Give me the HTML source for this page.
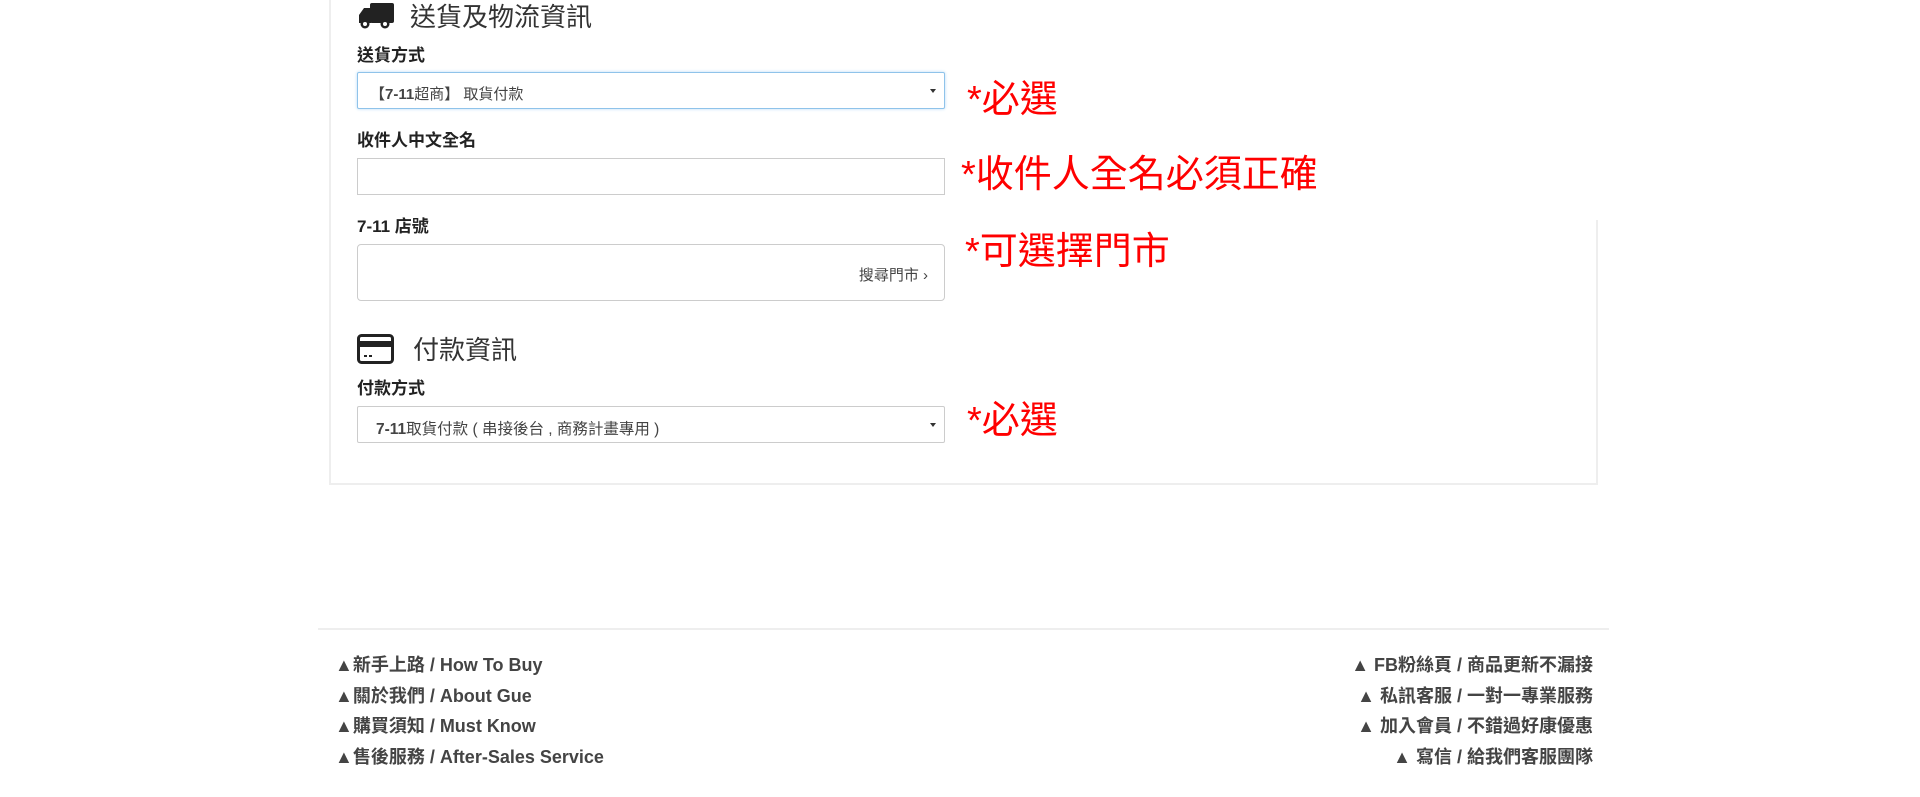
<!DOCTYPE html>
<html><head><meta charset="utf-8">
<style>
*{margin:0;padding:0;box-sizing:border-box}
body{width:1920px;height:797px;background:#fff;position:relative;overflow:hidden;font-family:"Liberation Sans","Noto Sans CJK TC",sans-serif;color:#333}
.a{position:absolute;white-space:nowrap}
.lbl{font-size:17px;font-weight:bold;color:#222;line-height:1}
.box{position:absolute;left:357px;width:588px;border:1px solid #ccc;background:#fff}
.red{color:#f00;font-size:38px;line-height:1}
.h{font-size:26px;color:#333;line-height:1}
.f{font-size:18px;font-weight:bold;color:#444;line-height:1}
.arr{position:absolute;right:8px;top:50%;margin-top:-2px;border-left:3px solid transparent;border-right:3px solid transparent;border-top:4px solid #333}
</style></head><body>
<div class="a" style="left:329px;top:-2px;width:2px;height:487px;background:#eee"></div>
<div class="a" style="left:1596px;top:220px;width:2px;height:265px;background:#eee"></div>
<div class="a" style="left:329px;top:483px;width:1269px;height:2px;background:#eee"></div>

<svg class="a" style="left:358px;top:3px" width="36" height="27" viewBox="0 0 36 27"><rect x="12" y="0" width="24" height="20" rx="2" fill="#222"/><path d="M1 12 L6 5 H13 V20 H1Z" fill="#222"/><circle cx="7" cy="21" r="4.5" fill="#222"/><circle cx="7" cy="21" r="2" fill="#fff"/><circle cx="27" cy="21" r="4.5" fill="#222"/><circle cx="27" cy="21" r="2" fill="#fff"/></svg>
<div class="a h" style="left:410px;top:4px">送貨及物流資訊</div>

<div class="a lbl" style="left:357px;top:47px">送貨方式</div>
<div class="box" style="top:72px;height:37px;border-color:#8fc3ea;box-shadow:0 0 3px #b8dbf5;border-radius:2px"><span class="a" style="left:12px;top:10px;font-size:15px;color:#444"><b>【7-11</b>超商】 取貨付款</span><div class="arr"></div></div>
<div class="a red" style="left:967px;top:81px">*必選</div>

<div class="a lbl" style="left:357px;top:132px">收件人中文全名</div>
<div class="box" style="top:158px;height:37px"></div>
<div class="a red" style="left:961px;top:156px">*收件人全名必須正確</div>

<div class="a lbl" style="left:357px;top:218px">7-11 店號</div>
<div class="box" style="top:244px;height:57px;border-radius:4px"><span class="a" style="right:16px;top:19px;font-size:15px;color:#444">搜尋門市 ›</span></div>
<div class="a red" style="left:965px;top:233px">*可選擇門市</div>

<svg class="a" style="left:357px;top:334px" width="37" height="30" viewBox="0 0 37 30"><rect x="1.5" y="1.5" width="34" height="27" rx="3" fill="none" stroke="#222" stroke-width="3"/><rect x="1.5" y="7" width="34" height="6" fill="#222"/><rect x="7" y="21" width="3" height="2" fill="#222"/><rect x="12" y="21" width="3" height="2" fill="#222"/></svg>
<div class="a h" style="left:413px;top:337px">付款資訊</div>

<div class="a lbl" style="left:357px;top:380px">付款方式</div>
<div class="box" style="top:406px;height:37px;border-radius:2px"><span class="a" style="left:18px;top:10px;font-size:15.5px;color:#444"><b>7-11</b>取貨付款 ( 串接後台 , 商務計畫專用 )</span><div class="arr"></div></div>
<div class="a red" style="left:967px;top:402px">*必選</div>

<div class="a" style="left:318px;top:628px;width:1291px;height:2px;background:#eee"></div>
<div class="a f" style="left:335px;top:656px">▲新手上路 / How To Buy</div>
<div class="a f" style="left:335px;top:687px">▲關於我們 / About Gue</div>
<div class="a f" style="left:335px;top:717px">▲購買須知 / Must Know</div>
<div class="a f" style="left:335px;top:748px">▲售後服務 / After-Sales Service</div>
<div class="a f" style="right:327px;top:656px">▲ FB粉絲頁 / 商品更新不漏接</div>
<div class="a f" style="right:327px;top:687px">▲ 私訊客服 / 一對一專業服務</div>
<div class="a f" style="right:327px;top:717px">▲ 加入會員 / 不錯過好康優惠</div>
<div class="a f" style="right:327px;top:748px">▲ 寫信 / 給我們客服團隊</div>
</body></html>
